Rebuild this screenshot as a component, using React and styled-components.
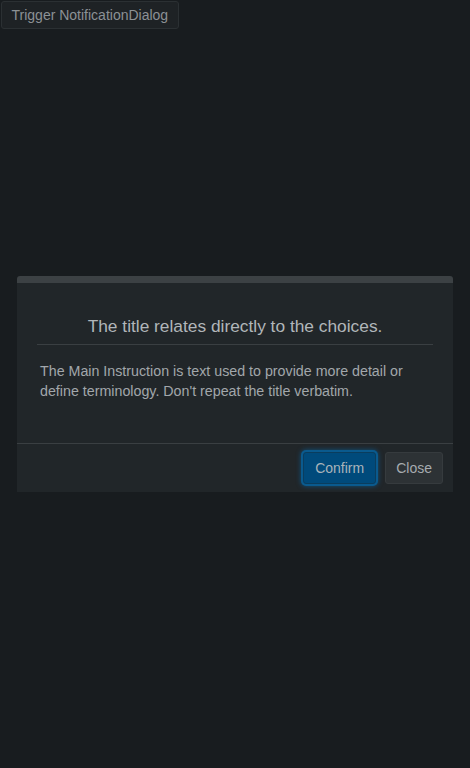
import styled, { createGlobalStyle } from 'styled-components';

const GlobalStyle = createGlobalStyle`
  html, body {
    margin: 0;
    height: 100%;
    background: #181c1f;
  }
  body {
    font-family: "Liberation Sans", Arial, sans-serif;
  }
  #root {
    min-height: 100%;
  }
`;

const Page = styled.div`
  position: relative;
  height: 768px;
`;

const TriggerButton = styled.button`
  margin: 1px;
  height: 28px;
  padding: 0 9.5px;
  background: #1e2225;
  border: 1px solid #2b3033;
  border-radius: 3px;
  color: #8c9195;
  font-family: "Liberation Sans", Arial, sans-serif;
  font-size: 14px;
  cursor: pointer;
`;

// overlay holds the dialog in the middle of the window
const Overlay = styled.div`
  position: absolute;
  inset: 0;
  display: flex;
  align-items: center;
  justify-content: center;
`;

const Dialog = styled.div`
  width: 436px;
  background: #212629;
  border-top: 7px solid #3c4144;
  border-radius: 3px 3px 0 0;
  display: flex;
  flex-direction: column;
`;

const Content = styled.div`
  padding: 31px 20px 42px;
`;

const Title = styled.h2`
  margin: 0;
  padding-bottom: 6px;
  border-bottom: 1px solid #3a3f42;
  text-align: center;
  font-size: 17.33px;
  line-height: 24px;
  font-weight: normal;
  color: #b1b6ba;
`;

const Instruction = styled.p`
  margin: 16px 0 0;
  padding: 0 3px;
  font-size: 14.25px;
  line-height: 20px;
  color: #a2a7ab;
`;

const Footer = styled.div`
  display: flex;
  justify-content: flex-end;
  gap: 9px;
  padding: 8px 10px;
  border-top: 1px solid #3a3f42;
`;

const ActionButton = styled.button`
  height: 32px;
  padding: 0 ${(p) => (p.$primary ? '11px' : '10px')};
  border-radius: 3px;
  font-family: "Liberation Sans", Arial, sans-serif;
  font-size: 14px;
  cursor: pointer;
  color: ${(p) => (p.$primary ? '#a9b3ba' : '#a6abaf')};
  background: ${(p) => (p.$primary ? '#004a7b' : '#2d3235')};
  border: 1px solid ${(p) => (p.$primary ? '#0a3d5e' : '#363b3e')};
  box-shadow: ${(p) =>
    p.$primary ? '0 0 0 2px #0a5a8e, 0 0 5px 2px rgba(0, 120, 200, 0.55)' : 'none'};
`;

export default function App() {
  return (
    <Page>
      <GlobalStyle />
      <TriggerButton>Trigger NotificationDialog</TriggerButton>
      <Overlay>
        <Dialog>
          <Content>
            <Title>The title relates directly to the choices.</Title>
            <Instruction>
              The Main Instruction is text used to provide more detail or define
              terminology. Don't repeat the title verbatim.
            </Instruction>
          </Content>
          <Footer>
            <ActionButton $primary>Confirm</ActionButton>
            <ActionButton>Close</ActionButton>
          </Footer>
        </Dialog>
      </Overlay>
    </Page>
  );
}
